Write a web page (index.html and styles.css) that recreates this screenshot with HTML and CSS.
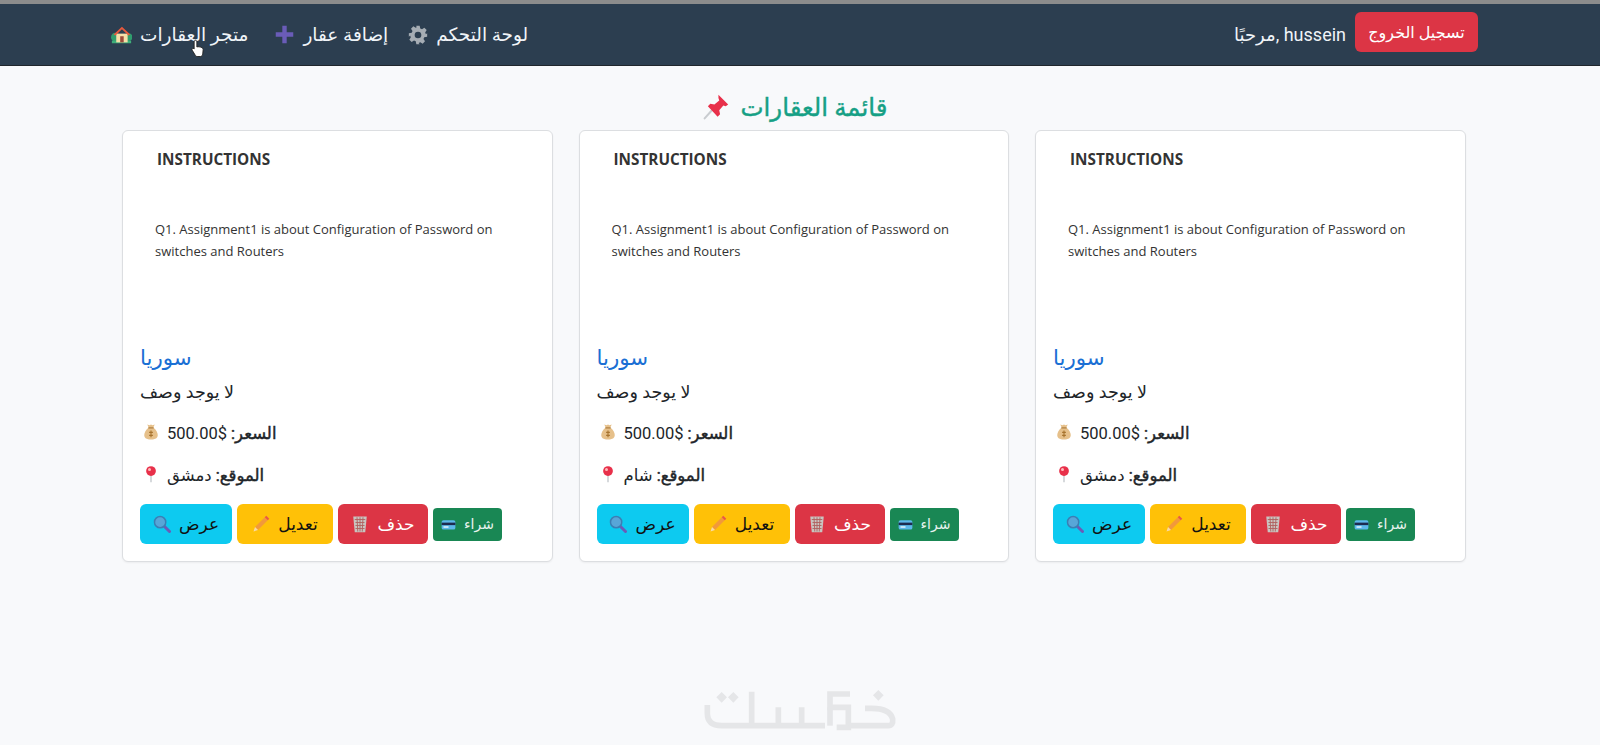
FILE: index.html
```html
<!DOCTYPE html>
<html lang="ar">
<head>
  <meta charset="UTF-8" />
  <title>قائمة العقارات</title>
  <link rel="stylesheet" href="styles.css">
</head>
<body>

  <!-- Icon set -->
  <svg class="icon-defs" width="0" height="0" aria-hidden="true">
    <symbol id="i-home" viewBox="0 0 24 24">
      <circle cx="5" cy="15" r="5" fill="#2f9e6e"/>
      <circle cx="20" cy="15" r="4.500" fill="#2f9e6e"/>
      <rect x="1" y="19" width="22" height="3" fill="#3fae7a"/>
      <rect x="6" y="11" width="13" height="10" fill="#f6dfa8"/>
      <path d="M3 12 12.500 3 22 12l-2 1-7.500-7L5 13z" fill="#e8593d"/>
      <rect x="10.500" y="14" width="4" height="7" fill="#9c4a3a"/>
    </symbol>
    <symbol id="i-gear" viewBox="0 0 24 24">
      <path fill="#a6adb4" fill-rule="evenodd" d="M10 1h4l.7 3.200 2.100.9 2.800-1.800 2.800 2.800-1.800 2.800.9 2.100L23 10v4l-3.500.7-.9 2.100 1.800 2.800-2.800 2.800-2.800-1.800-2.100.9L14 23h-4l-.7-3.500-2.100-.9-2.800 1.800-2.800-2.800 1.800-2.800-.9-2.100L1 14v-4l3.500-.7.900-2.100L3.600 4.400 6.400 1.600l2.800 1.800 1-.4zM12 8a4 4 0 1 0 0 8 4 4 0 0 0 0-8z"/>
    </symbol>
    <symbol id="i-plus" viewBox="0 0 24 24">
      <path fill="#6a5cb8" d="M9.500 2h5v7.500H22v5h-7.500V22h-5v-7.500H2v-5h7.500z"/>
    </symbol>
    <symbol id="i-pushpin" viewBox="0 0 32 32">
      <path d="M11 20 2 30" stroke="#c9ccd0" stroke-width="2.500" stroke-linecap="round"/>
      <path fill="#e8304a" d="M19 1l12 12-3 2-3-1-5 6 1 5-3 3L6 15l3-3 5 1 6-5-1-3z"/>
    </symbol>
    <symbol id="i-bag" viewBox="0 0 24 24">
      <path fill="#e6c08a" d="M9 6 7 2l3 1 2-1 2 1 3-1-2 4c4 3 6 7 6 10 0 4-3 6-9 6s-9-2-9-6c0-3 2-7 6-10z"/>
      <rect x="8.500" y="5.500" width="7" height="2" fill="#b98a4e"/>
      <path d="M12 10v9M9.500 12.500h5M9.500 16.500h5" stroke="#a8742f" stroke-width="1.500"/>
    </symbol>
    <symbol id="i-pin" viewBox="0 0 24 24">
      <path d="M12 12v11" stroke="#c9ccd0" stroke-width="2"/>
      <circle cx="12" cy="8" r="6.500" fill="#e8304a"/>
      <circle cx="10" cy="6" r="2" fill="#fbb"/>
    </symbol>
    <symbol id="i-search" viewBox="0 0 24 24">
      <path d="M14 14 22 22" stroke="#6a5cb8" stroke-width="4" stroke-linecap="round"/>
      <circle cx="9.500" cy="9.500" r="7.500" fill="#58a6d8" stroke="#3b7fb4" stroke-width="2"/>
    </symbol>
    <symbol id="i-pencil" viewBox="0 0 24 24">
      <path fill="#f2993a" d="M17 3l4 4L8 20l-4-4z"/>
      <path fill="#e8574a" d="M17 3l2-2 4 4-2 2z"/>
      <path fill="#f7d9a8" d="M4 16l4 4-6 2z"/>
    </symbol>
    <symbol id="i-trash" viewBox="0 0 24 24">
      <path fill="#c9c4c0" d="M3 2h18l-2 21H5z"/>
      <path stroke="#b0615f" stroke-width="1.200" fill="none" d="M5 6h14M6 10h12M6 14h12M6 18h12M8 3l1 19M12 3v19M16 3l-1 19"/>
    </symbol>
    <symbol id="i-card" viewBox="0 0 24 24">
      <rect x="1" y="5" width="22" height="15" rx="3" fill="#5cb8ea"/>
      <rect x="1" y="9" width="22" height="4" fill="#1d2b4f"/>
      <rect x="4" y="15" width="8" height="2" fill="#fff"/>
    </symbol>
  </svg>

  <div class="top-strip"></div>

  <nav class="navbar">
    <div class="nav-links">
      <a class="nav-link" href="#"><svg class="nav-icon"><use href="#i-home"/></svg>متجر العقارات</a>
      <a class="nav-link" href="#"><svg class="nav-icon"><use href="#i-plus"/></svg>إضافة عقار</a>
      <a class="nav-link" href="#"><svg class="nav-icon gear"><use href="#i-gear"/></svg>لوحة التحكم</a>
    </div>
    <div class="nav-user">
      <span class="greeting">مرحبًا, hussein</span>
      <button class="logout-btn">تسجيل الخروج</button>
    </div>
  </nav>

  <main class="page">
    <h1 class="page-title"><svg class="title-icon"><use href="#i-pushpin"/></svg>قائمة العقارات</h1>

    <div class="cards">

      <div class="card">
        <div class="card-img">
          <div class="img-heading">INSTRUCTIONS</div>
          <p class="img-text">Q1. Assignment1 is about Configuration of Password on switches and Routers</p>
        </div>
        <div class="card-body">
          <h2 class="card-title">سوريا</h2>
          <p class="card-desc">لا يوجد وصف</p>
          <p class="card-line"><svg class="line-icon"><use href="#i-bag"/></svg><strong>السعر:</strong> $500.00</p>
          <p class="card-line"><svg class="line-icon"><use href="#i-pin"/></svg><strong>الموقع:</strong> دمشق</p>
          <div class="card-actions">
            <button class="btn btn-view"><svg class="btn-icon"><use href="#i-search"/></svg>عرض</button>
            <button class="btn btn-edit"><svg class="btn-icon"><use href="#i-pencil"/></svg>تعديل</button>
            <button class="btn btn-delete"><svg class="btn-icon"><use href="#i-trash"/></svg>حذف</button>
            <button class="btn btn-buy"><svg class="btn-icon"><use href="#i-card"/></svg>شراء</button>
          </div>
        </div>
      </div>

      <div class="card">
        <div class="card-img">
          <div class="img-heading">INSTRUCTIONS</div>
          <p class="img-text">Q1. Assignment1 is about Configuration of Password on switches and Routers</p>
        </div>
        <div class="card-body">
          <h2 class="card-title">سوريا</h2>
          <p class="card-desc">لا يوجد وصف</p>
          <p class="card-line"><svg class="line-icon"><use href="#i-bag"/></svg><strong>السعر:</strong> $500.00</p>
          <p class="card-line"><svg class="line-icon"><use href="#i-pin"/></svg><strong>الموقع:</strong> شام</p>
          <div class="card-actions">
            <button class="btn btn-view"><svg class="btn-icon"><use href="#i-search"/></svg>عرض</button>
            <button class="btn btn-edit"><svg class="btn-icon"><use href="#i-pencil"/></svg>تعديل</button>
            <button class="btn btn-delete"><svg class="btn-icon"><use href="#i-trash"/></svg>حذف</button>
            <button class="btn btn-buy"><svg class="btn-icon"><use href="#i-card"/></svg>شراء</button>
          </div>
        </div>
      </div>

      <div class="card">
        <div class="card-img">
          <div class="img-heading">INSTRUCTIONS</div>
          <p class="img-text">Q1. Assignment1 is about Configuration of Password on switches and Routers</p>
        </div>
        <div class="card-body">
          <h2 class="card-title">سوريا</h2>
          <p class="card-desc">لا يوجد وصف</p>
          <p class="card-line"><svg class="line-icon"><use href="#i-bag"/></svg><strong>السعر:</strong> $500.00</p>
          <p class="card-line"><svg class="line-icon"><use href="#i-pin"/></svg><strong>الموقع:</strong> دمشق</p>
          <div class="card-actions">
            <button class="btn btn-view"><svg class="btn-icon"><use href="#i-search"/></svg>عرض</button>
            <button class="btn btn-edit"><svg class="btn-icon"><use href="#i-pencil"/></svg>تعديل</button>
            <button class="btn btn-delete"><svg class="btn-icon"><use href="#i-trash"/></svg>حذف</button>
            <button class="btn btn-buy"><svg class="btn-icon"><use href="#i-card"/></svg>شراء</button>
          </div>
        </div>
      </div>

    </div>
  </main>

  <!-- Watermark logo -->
  <svg class="watermark" viewBox="0 0 720 225" fill="none" stroke="#e5e6e8" stroke-width="17">
    <path d="M82 105V130Q82 167 125 167H435"/>
    <path d="M215 65V167M295 112V167M365 112V167"/>
    <path d="M510 72H450V112H505V172H470"/>
    <path d="M450 112V167"/>
    <path d="M505 167H625Q640 167 638 147Q630 115 575 115H555"/>
    <path fill="#e5e6e8" stroke="none" d="M125 66l16 16-16 16-16-16zM160 66l16 16-16 16-16-16zM595 60l16 16-16 16-16-16z"/>
  </svg>

  <!-- Mouse pointer from the recording -->
  <svg class="cursor" viewBox="0 0 16 22">
    <path fill="#fff" stroke="#222" stroke-width="1.100" d="M5 1.500c1 0 1.700.7 1.700 1.700v6l1.300-.3 1.500.2 1.500.3 1.500.6c1 .5 1.500 1.200 1.500 2.300l-.5 5c-.2 1.500-1.200 3-2.500 3H7c-1 0-1.500-.5-2-1.200L1.300 13c-.5-1-.2-1.700.5-2 .7-.3 1.300 0 1.700.6V3.200c0-1 .7-1.700 1.500-1.700z"/>
  </svg>

</body>
</html>
```

FILE: styles.css
```css
* {
  box-sizing: border-box;
}

body {
  margin: 0;
  height: 745px;
  overflow: hidden;
  position: relative;
  background-color: #f8f9fb;
  color: #212529;
  font-family: Roboto, "Noto Sans", "DejaVu Sans", sans-serif;
  font-size: 17px;
}

.icon-defs {
  position: absolute;
}

.top-strip {
  height: 4px;
  background-color: #8c8c8c;
}

/* Navbar */
.navbar {
  height: 62px;
  padding: 0 122px 0 111px;
  display: flex;
  justify-content: space-between;
  align-items: center;
  background-color: #2c3e50;
  color: #f0f4f8;
  border-bottom: 1px solid #20262c;
}

.nav-links {
  display: flex;
  gap: 26px;
}

.nav-links .nav-link:nth-child(3) {
  margin-left: -6px;
}

.nav-link {
  display: flex;
  align-items: center;
  gap: 8px;
  color: #f0f4f8;
  text-decoration: none;
  font-size: 18.500px;
}

.nav-icon {
  width: 21px;
  height: 21px;
}

.nav-icon.gear {
  width: 20px;
  height: 20px;
}

.nav-user {
  align-self: flex-start;
  padding-top: 8px;
  display: flex;
  gap: 9px;
  font-size: 18px;
}

.greeting {
  margin-top: 12px;
}

.logout-btn {
  width: 123px;
  height: 40px;
  background-color: #dc3545;
  color: white;
  border: none;
  border-radius: 6px;
  font-family: inherit;
  font-size: 16px;
}

/* Main */
.page {
  padding: 0 134px 0 122px;
}

.page-title {
  margin: 0;
  height: 64px;
  padding: 18px 0 0 3px;
  display: flex;
  justify-content: center;
  align-items: center;
  gap: 11px;
  color: #16a085;
  font-size: 24.500px;
  font-weight: 400;
  -webkit-text-stroke: 0.4px #16a085;
}

.title-icon {
  width: 26px;
  height: 26px;
}

.cards {
  display: grid;
  grid-template-columns: repeat(3, 430.500px);
  gap: 26px;
}

.card {
  height: 432px;
  background-color: white;
  border: 1px solid #dcdee1;
  border-radius: 6px;
  box-shadow: 0 1px 2px rgba(0, 0, 0, 0.05);
}

.card-img {
  height: 200px;
  padding: 18px 40px 0 32px;
  font-family: "Open Sans", sans-serif;
  color: #333;
}

.img-heading {
  padding-left: 2px;
  font-size: 15.300px;
  font-weight: 700;
}

.img-text {
  margin: 50px 0 0;
  font-size: 13px;
  line-height: 21.500px;
}

.card-body {
  padding: 12px 16px 0 17px;
}

.card-title {
  margin: 0;
  color: #1a6fd4;
  font-size: 21.300px;
  font-weight: 500;
  line-height: 30px;
}

.card-desc {
  margin: 7px 0 0;
  font-size: 17.500px;
  line-height: 24px;
}

.card-line {
  margin: 18px 0 0;
  font-size: 16.500px;
  line-height: 24px;
}

.card-line strong {
  font-weight: 400;
  -webkit-text-stroke: 0.45px #212529;
}

.line-icon {
  width: 18px;
  height: 18px;
  margin: 0 7px 0 2px;
  vertical-align: -2px;
}

.card-actions {
  margin-top: 16px;
  display: flex;
  align-items: center;
  gap: 5px;
}

.btn {
  height: 40px;
  display: flex;
  justify-content: center;
  align-items: center;
  gap: 8px;
  border: none;
  border-radius: 6px;
  font-family: inherit;
  font-size: 17px;
  padding: 0;
}

.btn-icon {
  width: 18px;
  height: 18px;
}

.btn-view {
  width: 92px;
  background-color: #0dcaf0;
  color: #111;
}

.btn-edit {
  width: 96px;
  background-color: #ffc107;
  color: #111;
}

.btn-delete {
  width: 90px;
  background-color: #dc3545;
  color: white;
}

.btn-buy {
  width: 69px;
  height: 33px;
  background-color: #198754;
  color: #e8f3ee;
  font-size: 14px;
  border-radius: 4px;
}

.btn-buy .btn-icon {
  width: 15px;
  height: 15px;
}

/* Over the page */
.watermark {
  position: absolute;
  left: 680px;
  top: 670px;
  width: 240px;
  height: 75px;
}

.cursor {
  position: absolute;
  left: 191px;
  top: 39px;
  width: 14px;
  height: 19px;
}
```
